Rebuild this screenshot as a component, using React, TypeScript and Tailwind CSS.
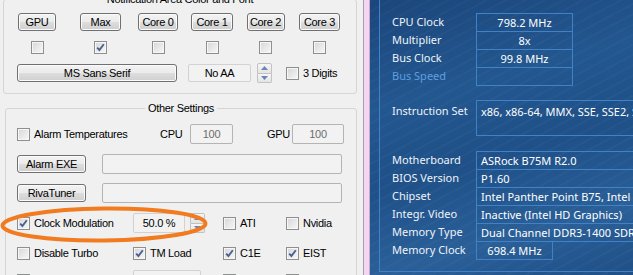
import React from 'react';

const Check = ({ checked = false }: { checked?: boolean }) => (
  <span className="w-[13px] h-[13px] shrink-0 border border-[#8e8f8f] bg-[linear-gradient(135deg,#d6d6d6,#f8f8f8)] shadow-[inset_0_0_0_1px_#f6f6f6] flex items-center justify-center">
    {checked && (
      <svg width="9" height="9" viewBox="0 0 9 9">
        <path d="M1.2 4.6 L3.4 7 L7.8 1.2" stroke="#4b5f92" strokeWidth="1.9" fill="none" />
      </svg>
    )}
  </span>
);

const Btn = ({ children, className }: { children: React.ReactNode; className: string }) => (
  <div
    className={
      'h-[18px] shrink-0 flex items-center justify-center border border-[#707070] rounded-[3px] bg-[linear-gradient(#f3f3f3_0%,#ebebeb_48%,#dddddd_52%,#cfcfcf_100%)] shadow-[inset_0_0_0_1px_#fbfbfb] leading-none ' +
      className
    }
  >
    {children}
  </div>
);

const Box = ({ children, className }: { children?: React.ReactNode; className: string }) => (
  <div className={'h-[20px] shrink-0 flex items-center justify-center border border-[#b4b4b4] rounded-[2px] bg-[#f2f2f2] ' + className}>
    {children}
  </div>
);

const Spin = () => (
  <div className="w-[15px] h-[20px] flex flex-col">
    <div className="flex-1 flex items-center justify-center border border-[#c2c2c2] rounded-t-[2px] bg-[linear-gradient(#f6f6f6,#e4e4e4)]">
      <svg width="7" height="4" viewBox="0 0 7 4">
        <path d="M0 4 L3.5 0 L7 4Z" fill="#6a86b8" />
      </svg>
    </div>
    <div className="flex-1 flex items-center justify-center border border-t-0 border-[#c2c2c2] rounded-b-[2px] bg-[linear-gradient(#f6f6f6,#e4e4e4)]">
      <svg width="7" height="4" viewBox="0 0 7 4">
        <path d="M0 0 L3.5 4 L7 0Z" fill="#6a86b8" />
      </svg>
    </div>
  </div>
);

const LeftPanel = () => (
  <div className="relative w-[363px] h-full shrink-0 bg-[#f0f0f0] overflow-hidden tracking-[-0.3px]">
    {/* Notification Area Color and Font */}
    <fieldset className="ml-[3px] -mt-[7px] w-[354px] border border-[#d5d5d5] rounded-[3px] pb-[10px]">
      <legend className="mx-auto px-[3px] leading-[13px]">Notification Area Color and Font</legend>
      <div className="mt-[7px] grid grid-cols-[66px_61px_54px_54px_53px_55px] items-center">
        <Btn className="justify-self-center w-[38px]">GPU</Btn>
        <Btn className="justify-self-center w-[41px]">Max</Btn>
        <Btn className="justify-self-center w-[40px]">Core 0</Btn>
        <Btn className="justify-self-center w-[42px]">Core 1</Btn>
        <Btn className="justify-self-center w-[38px]">Core 2</Btn>
        <Btn className="justify-self-center w-[41px]">Core 3</Btn>
      </div>
      <div className="mt-[10px] h-[13px] grid grid-cols-[66px_61px_54px_54px_53px_55px] items-center justify-items-center">
        <Check />
        <Check checked />
        <Check />
        <Check />
        <Check />
        <Check />
      </div>
      <div className="mt-[9px] h-[20px] flex items-center">
        <Btn className="ml-[13px] w-[160px]">MS Sans Serif</Btn>
        <div className="ml-[11px] w-[63px] h-[18px] flex items-center justify-center border border-[#d2d2d2] rounded-[2px] bg-[#f2f2f2]">
          No AA
        </div>
        <div className="ml-[6px]">
          <Spin />
        </div>
        <div className="ml-[14px] flex items-center gap-[4px]">
          <Check />
          <span>3 Digits</span>
        </div>
      </div>
    </fieldset>

    {/* Other Settings */}
    <fieldset className="ml-[5px] mt-[8px] w-[352px] border border-[#d5d5d5] rounded-[3px] pb-[10px]">
      <legend className="mx-auto px-[3px] leading-[13px]">Other Settings</legend>
      <div className="mt-[9px] h-[20px] flex items-center">
        <div className="ml-[11px] w-[143px] shrink-0 flex items-center gap-[4px]">
          <Check />
          <span>Alarm Temperatures</span>
        </div>
        <span className="w-[30px] shrink-0">CPU</span>
        <Box className="w-[43px] text-[#6d6d6d]">100</Box>
        <span className="ml-[34px] w-[25px] shrink-0">GPU</span>
        <Box className="w-[52px] text-[#6d6d6d]">100</Box>
      </div>
      <div className="mt-[10px] h-[20px] flex items-center">
        <Btn className="ml-[11px] w-[69px]">Alarm EXE</Btn>
        <Box className="ml-[16px] w-[240px]" />
      </div>
      <div className="mt-[9px] h-[20px] flex items-center">
        <Btn className="ml-[11px] w-[69px]">RivaTuner</Btn>
        <Box className="ml-[16px] w-[240px]" />
      </div>
      <div className="mt-[10px] h-[20px] flex items-center">
        <div className="ml-[11px] w-[116px] shrink-0 flex items-center gap-[4px]">
          <Check checked />
          <span>Clock Modulation</span>
        </div>
        <div className="w-[90px] shrink-0 flex items-center">
          <Box className="w-[52px] border-[#d2d2d2]">50.0 %</Box>
          <div className="ml-[5px]">
            <Spin />
          </div>
        </div>
        <div className="w-[63px] shrink-0 flex items-center gap-[4px]">
          <Check />
          <span>ATI</span>
        </div>
        <div className="flex items-center gap-[4px]">
          <Check />
          <span>Nvidia</span>
        </div>
      </div>
      <div className="mt-[10px] h-[20px] flex items-center">
        <div className="ml-[11px] w-[116px] shrink-0 flex items-center gap-[4px]">
          <Check />
          <span>Disable Turbo</span>
        </div>
        <div className="w-[90px] shrink-0 flex items-center gap-[4px]">
          <Check checked />
          <span>TM Load</span>
        </div>
        <div className="w-[63px] shrink-0 flex items-center gap-[4px]">
          <Check checked />
          <span>C1E</span>
        </div>
        <div className="flex items-center gap-[4px]">
          <Check checked />
          <span>EIST</span>
        </div>
      </div>
      <div className="mt-[7px] h-[20px] flex items-center">
        <div className="ml-[11px] w-[116px] shrink-0 flex items-center">
          <Check />
        </div>
        <div className="w-[90px] shrink-0 flex items-center">
          <Box className="w-[68px] border-[#d2d2d2]" />
        </div>
        <div className="w-[63px] shrink-0 flex items-center">
          <Check />
        </div>
        <Check />
      </div>
    </fieldset>

    {/* orange annotation */}
    <svg className="absolute left-0 top-[205px] pointer-events-none" width="212" height="42" viewBox="0 0 212 42">
      <ellipse cx="104" cy="19.5" rx="101.5" ry="16" fill="none" stroke="#f27a1f" strokeWidth="4" transform="rotate(-0.6 104 19.5)" />
    </svg>
  </div>
);

const topRows = [
  ['CPU Clock', '798.2 MHz'],
  ['Multiplier', '8x'],
  ['Bus Clock', '99.8 MHz'],
  ['Bus Speed', ''],
];

const boardRows = [
  ['Motherboard', 'ASRock B75M R2.0'],
  ['BIOS Version', 'P1.60'],
  ['Chipset', 'Intel Panther Point B75, Intel Ivy Bridge'],
  ['Integr. Video', 'Inactive  (Intel HD Graphics)'],
  ['Memory Type', 'Dual Channel DDR3-1400 SDRAM'],
];

const RightPanel = () => (
  <div className="flex-1 h-full overflow-hidden pl-[9px] text-[11px] text-[#eef3f8] whitespace-nowrap font-['Noto_Sans','Open_Sans',sans-serif] bg-[repeating-linear-gradient(152deg,rgba(255,255,255,0.025)_0_2px,transparent_2px_9px),linear-gradient(165deg,#1b467b_0%,#23578f_32%,#1f5088_55%,#2a5f98_80%,#1f4f86_100%)]">
    <div className="-mt-[20px] w-[290px] h-[292px] border-l border-t border-b border-[#3f82c8] pt-[32px] pl-[12px]">
      {/* clocks */}
      <div className="flex">
        <div className="w-[84px] shrink-0 flex flex-col">
          {topRows.map(([label], i) => (
            <div key={label} className={'h-[18px] leading-[18px] ' + (i === 3 ? 'text-[#5d9fe0]' : '')}>
              {label}
            </div>
          ))}
        </div>
        <div className="w-[97px] shrink-0 border border-[#3f82c8]">
          {topRows.map(([label, value], i) => (
            <div
              key={label}
              className={'text-center text-white ' + (i === 0 ? 'h-[17px] leading-[17px]' : 'h-[18px] leading-[17px] border-t border-[#3f82c8]')}
            >
              {value}
            </div>
          ))}
        </div>
      </div>

      {/* instruction set */}
      <div className="mt-[14px] flex">
        <div className="w-[84px] shrink-0 pt-[2px] leading-[18px]">Instruction Set</div>
        <div className="w-[300px] shrink-0 h-[36px] border border-[#3f82c8] pl-[4px] pt-[2px] leading-[18px] text-white">
          x86, x86-64, MMX, SSE, SSE2, SSE3, SSSE3, SSE4.1, SSE4.2
        </div>
      </div>

      {/* board */}
      <div className="mt-[15px] flex">
        <div className="w-[84px] shrink-0 flex flex-col">
          {boardRows.map(([label]) => (
            <div key={label} className="h-[18px] leading-[18px]">
              {label}
            </div>
          ))}
          <div className="h-[18px] leading-[18px]">Memory Clock</div>
        </div>
        <div className="flex flex-col shrink-0">
          <div className="w-[300px] border-l border-t border-b border-[#3f82c8]">
            {boardRows.map(([label, value], i) => (
              <div
                key={label}
                className={'pl-[4px] text-white ' + (i === 0 ? 'h-[17px] leading-[17px]' : 'h-[18px] leading-[17px] border-t border-[#3f82c8]')}
              >
                {value}
              </div>
            ))}
          </div>
          <div className="w-[77px] h-[18px] border-x border-b border-[#3f82c8] text-center leading-[17px] text-white">698.4 MHz</div>
        </div>
      </div>
    </div>
  </div>
);

export default function App() {
  return (
    <div className="flex w-[633px] h-[275px] overflow-hidden text-[11px] text-black font-['Liberation_Sans',Arial,sans-serif]">
      <LeftPanel />
      <div className="w-px shrink-0 bg-[#a7a1a7]" />
      <div className="w-[5px] shrink-0 bg-[#f4d6f2]" />
      <div className="w-px shrink-0 bg-[#c6a8cc]" />
      <RightPanel />
    </div>
  );
}
